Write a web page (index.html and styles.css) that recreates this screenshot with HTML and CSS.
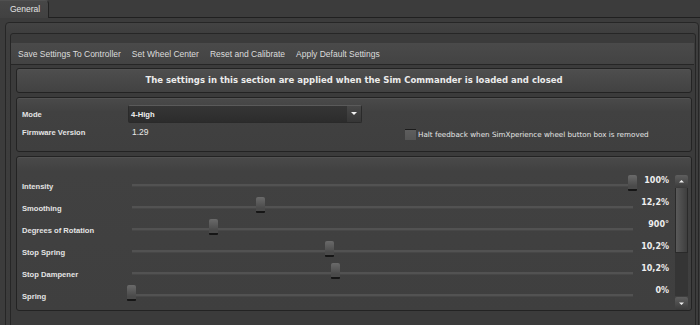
FILE: index.html
```html
<!DOCTYPE html>
<html>
<head>
<meta charset="utf-8">
<link rel="stylesheet" href="styles.css">
</head>
<body>
<div class="tabs">
  <div class="tab">General</div>
  <div class="tab-rest"></div>
</div>
<div class="outer">
  <div class="inner">
    <div class="toolbar">
      <span class="tool">Save Settings To Controller</span>
      <span class="tool">Set Wheel Center</span>
      <span class="tool">Reset and Calibrate</span>
      <span class="tool">Apply Default Settings</span>
    </div>
    <div class="box header">The settings in this section are applied when the Sim Commander is loaded and closed</div>
    <div class="box mode">
      <div class="label">Mode</div>
      <div class="select"><span class="select-text">4-High</span><span class="select-arrow"></span></div>
      <div></div>
      <div class="label">Firmware Version</div>
      <div class="value-text">1.29</div>
      <div class="check"><span class="checkbox"></span><span class="check-label">Halt feedback when SimXperience wheel button box is removed</span></div>
    </div>
    <div class="box sliders">
      <div class="rows">
        <div class="row"><div class="label">Intensity</div><div class="track"><span class="thumb" style="left:100%"></span></div><div class="val">100%</div></div>
        <div class="row"><div class="label">Smoothing</div><div class="track"><span class="thumb" style="left:25.8%"></span></div><div class="val">12,2%</div></div>
        <div class="row"><div class="label">Degrees of Rotation</div><div class="track"><span class="thumb" style="left:16.4%"></span></div><div class="val">900°</div></div>
        <div class="row"><div class="label">Stop Spring</div><div class="track"><span class="thumb" style="left:39.6%"></span></div><div class="val">10,2%</div></div>
        <div class="row"><div class="label">Stop Dampener</div><div class="track"><span class="thumb" style="left:40.8%"></span></div><div class="val">10,2%</div></div>
        <div class="row"><div class="label">Spring</div><div class="track"><span class="thumb" style="left:0%"></span></div><div class="val">0%</div></div>
      </div>
      <div class="scrollbar">
        <div class="sb-btn"><svg width="13" height="13" viewBox="0 0 13 13"><path d="M4 7.5 L6.5 5 L9 7.5 Z" fill="#f0f0f0"/></svg></div>
        <div class="sb-track"><div class="sb-thumb"></div></div>
        <div class="sb-btn"><svg width="13" height="13" viewBox="0 0 13 13"><path d="M4 5.5 L6.5 8 L9 5.5 Z" fill="#f0f0f0"/></svg></div>
      </div>
    </div>
  </div>
</div>
</body>
</html>
```
FILE: styles.css
```css
html, body {
  margin: 0;
  padding: 0;
  background: #3c3c3c;
  width: 700px;
  height: 325px;
  overflow: hidden;
  font-family: "Liberation Sans", Arial, sans-serif;
  color: #e2e2e2;
}

.tabs {
  display: flex;
  height: 18px;
}
.tab {
  width: 49px;
  height: 18px;
  box-sizing: border-box;
  background: linear-gradient(#474747, #414141);
  border-top: 1px solid #505050;
  border-right: 1px solid #222;
  border-top-right-radius: 4px;
  font-size: 8.5px;
  line-height: 17px;
  padding-left: 10px;
  color: #e4e4e4;
}
.tab-rest {
  flex: 1;
  border-bottom: 1px solid #202020;
}

.outer {
  margin: 4px 1px 0 5px;
  height: 299px;
  border: 1px solid #262626;
  border-radius: 4px 4px 0 0;
  padding: 10px 2px 4px 4px;
  background: linear-gradient(#434343 0, #3e3e3e 10px, #3c3c3c 100%);
}
.inner {
  height: 281px;
  border: 1px solid #262626;
  border-radius: 3px 3px 0 0;
  padding: 9px 1px 4px 0;
  background: #3b3b3b;
}

.toolbar {
  height: 21px;
  border-bottom: 1px solid #262626;
  background: linear-gradient(#4a4a4a, #434343);
  display: flex;
  align-items: center;
  gap: 11px;
  padding-left: 7px;
  font-size: 8.5px;
  color: #dcdcdc;
}

.box {
  margin: 4px 2px 0 5px;
  border: 1px solid #232323;
  border-radius: 3px;
  box-shadow: inset 0 1px 0 #525252;
  background: linear-gradient(#4a4a4a 0, #414141 14px, #3f3f3f 100%);
  box-sizing: border-box;
}
.header {
  margin-top: 3px;
  height: 25px;
  background: linear-gradient(#4e4e4e, #424242);
  text-align: center;
  font-family: "DejaVu Sans", Verdana, sans-serif;
  font-weight: bold;
  font-size: 8.5px;
  line-height: 23px;
  color: #ececec;
}

.label {
  font-size: 7.6px;
  font-weight: bold;
  color: #e4e4e4;
}

.mode {
  height: 55px;
  padding: 7px 0 0 5px;
  display: grid;
  grid-template-columns: 106px 234px 1fr;
  grid-template-rows: 18px 18px;
  align-items: center;
}
.select {
  height: 18px;
  box-sizing: border-box;
  border: 1px solid #2a2a2a;
  border-top-color: #5a5a5a;
  border-radius: 2px;
  background: linear-gradient(#353535, #2c2c2c);
  display: flex;
  align-items: center;
  justify-content: space-between;
}
.select-text {
  font-size: 7.6px;
  font-weight: bold;
  color: #f0f0f0;
  padding-left: 2px;
}
.select-arrow {
  width: 14px;
  height: 16px;
  background: linear-gradient(#474747, #363636);
  position: relative;
}
.select-arrow::after {
  content: "";
  position: absolute;
  left: 4px;
  top: 6px;
  border-left: 3px solid transparent;
  border-right: 3px solid transparent;
  border-top: 3px solid #f2f2f2;
}
.value-text {
  font-size: 8.5px;
  color: #e8e8e8;
  padding-left: 4px;
}
.check {
  display: flex;
  align-items: center;
  margin-left: 43px;
  margin-top: 4px;
}
.checkbox {
  width: 11px;
  height: 11px;
  box-sizing: border-box;
  border-top: 1px solid #1c1c1c;
  background: linear-gradient(#5e5e5e, #555);
  margin-right: 2px;
}
.check-label {
  font-family: "DejaVu Sans", Verdana, sans-serif;
  font-size: 7.2px;
  color: #e6e6e6;
}

.sliders {
  height: 155px;
  padding: 18px 2px 0 5px;
  display: flex;
}
.rows {
  width: 647px;
}
.row {
  height: 22px;
  display: grid;
  grid-template-columns: 110px 501px 36px;
  align-items: center;
}
.track {
  position: relative;
  height: 2px;
  background: #525252;
  border-bottom: 1px solid #474747;
  margin-top: -1px;
}
.thumb {
  position: absolute;
  top: -9px;
  width: 9px;
  height: 16px;
  margin-left: -5px;
  box-sizing: border-box;
  border-radius: 2px 2px 1px 1px;
  background: linear-gradient(#6a6a6a, #4a4a4a 80%);
  border-bottom: 2px solid #161616;
}
.val {
  align-self: start;
  margin-top: 1px;
  text-align: right;
  font-family: "DejaVu Sans", Verdana, sans-serif;
  font-weight: bold;
  font-size: 8px;
  line-height: 10px;
  color: #eeeeee;
}

.scrollbar {
  width: 13px;
  margin-left: 6px;
  height: 135px;
  display: flex;
  flex-direction: column;
}
.sb-btn {
  height: 13px;
  border-radius: 2px;
  background: linear-gradient(#5e5e5e, #3a3a3a);
  line-height: 0;
}
.sb-track {
  flex: 1;
  background: #353535;
  margin-bottom: 1px;
}
.sb-thumb {
  height: 65px;
  box-sizing: border-box;
  border: 1px solid #2a2a2a;
  border-top: none;
  background: linear-gradient(90deg, #5a5a5a, #3e3e3e);
}
```
